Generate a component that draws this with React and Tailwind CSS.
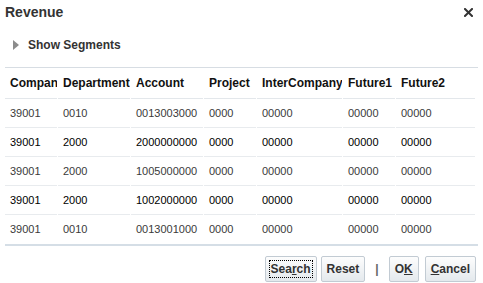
import React from 'react';

const columns = ['Company', 'Department', 'Account', 'Project', 'InterCompany', 'Future1', 'Future2'];

const rows = [
  { dark: false, cells: ['39001', '0010', '0013003000', '0000', '00000', '00000', '00000'] },
  { dark: true, cells: ['39001', '2000', '2000000000', '0000', '00000', '00000', '00000'] },
  { dark: false, cells: ['39001', '2000', '1005000000', '0000', '00000', '00000', '00000'] },
  { dark: true, cells: ['39001', '2000', '1002000000', '0000', '00000', '00000', '00000'] },
  { dark: false, cells: ['39001', '0010', '0013001000', '0000', '00000', '00000', '00000'] },
];

function Button({ children, focused }) {
  return (
    <button className="h-[26px] px-[3px] rounded-[2px] border border-[#c2cbd3] bg-gradient-to-b from-[#fdfdfd] to-[#e4e9ed] text-[12px] font-bold text-[#333] flex items-center">
      <span className={focused ? 'px-[1px] leading-[16px] border border-dotted border-black' : 'px-[2px] leading-[16px]'}>
        {children}
      </span>
    </button>
  );
}

export default function App() {
  return (
    <div className="w-[483px] h-[283px] bg-white overflow-hidden" style={{ fontFamily: '"Liberation Sans", Arial, sans-serif' }}>
      {/* Title bar */}
      <div className="flex items-center justify-between h-[24px] pl-[5px] pr-[10px]">
        <h1 className="text-[14px] font-bold text-[#333]">Revenue</h1>
        <svg width="9" height="9" viewBox="0 0 9 9" className="mt-[1px]">
          <path d="M1 1 L8 8 M8 1 L1 8" stroke="#333" strokeWidth="2" strokeLinecap="square" />
        </svg>
      </div>

      {/* Disclosure */}
      <div className="flex items-center h-[16px] mt-[13px] pl-[13px] gap-[9px]">
        <svg width="6" height="10" viewBox="0 0 6 10">
          <path d="M0 0 L6 5 L0 10 Z" fill="#8c8c8c" />
        </svg>
        <span className="text-[12px] font-bold text-[#333]">Show Segments</span>
      </div>

      {/* Table */}
      <div className="mx-[5px] mt-[14px] border-t border-[#d7dde3] border-b-2 border-b-[#d5dee6]">
        <div className="grid grid-cols-[52px_72px_72px_52px_85px_52px_79px] gap-x-px">
          {columns.map((c) => (
            <div key={c} className="h-[31px] border-b border-[#e3e7eb] pl-[5px] flex items-center overflow-hidden whitespace-nowrap text-[12px] font-bold text-[#111]">
              {c}
            </div>
          ))}
          {rows.map((r, i) =>
            r.cells.map((v, j) => (
              <div
                key={i + '-' + j}
                className={`h-[29px] pl-[5px] flex items-center overflow-hidden whitespace-nowrap text-[11px] ${i < rows.length - 1 ? 'border-b border-[#e8ebee]' : ''} ${r.dark ? 'text-black' : 'text-[#3a3a3a]'}`}
              >
                {v}
              </div>
            ))
          )}
        </div>
      </div>

      {/* Footer buttons */}
      <div className="flex items-center justify-end mt-[10px] pr-[7px]">
        <Button focused>
          Sea<span className="underline">r</span>ch
        </Button>
        <div className="ml-[4px]">
          <Button>Reset</Button>
        </div>
        <span className="mx-[10px] text-[12px] font-bold text-[#666]">|</span>
        <Button>
          O<span className="underline">K</span>
        </Button>
        <div className="ml-[6px]">
          <Button>
            <span className="underline">C</span>ancel
          </Button>
        </div>
      </div>
    </div>
  );
}
